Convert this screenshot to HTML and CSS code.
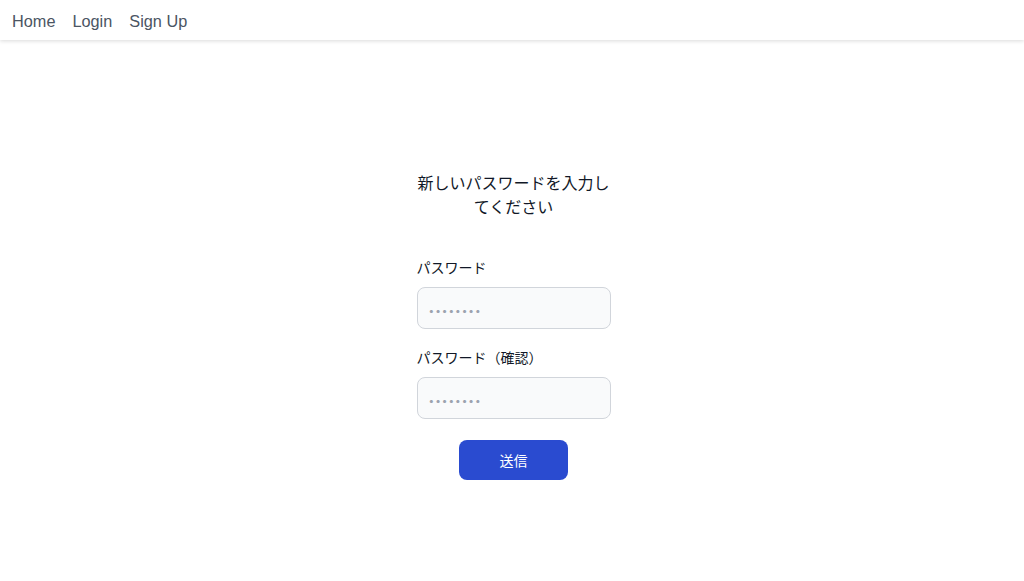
FILE: index.html
```html
<!DOCTYPE html>
<html lang="ja">
<head>
<meta charset="utf-8">
<link rel="stylesheet" href="styles.css">
</head>
<body>
<nav class="nav">
  <a class="nav-link" href="#">Home</a>
  <a class="nav-link" href="#">Login</a>
  <a class="nav-link" href="#">Sign Up</a>
</nav>
<main class="main">
  <form class="form">
    <h1 class="title">新しいパスワードを入力してください</h1>
    <div class="field first">
      <label class="label">パスワード</label>
      <input class="input" type="password" placeholder="••••••••">
    </div>
    <div class="field">
      <label class="label">パスワード（確認）</label>
      <input class="input" type="password" placeholder="••••••••">
    </div>
    <div class="actions">
      <button class="btn" type="button">送信</button>
    </div>
  </form>
</main>
</body>
</html>
```
FILE: styles.css
```css
* { box-sizing: border-box; }
html, body { margin: 0; padding: 0; background: #fff; }
body {
  font-family: Inter, "Noto Sans CJK JP", sans-serif;
  color: #111827;
}
.nav {
  height: 40px;
  display: flex;
  align-items: center;
  gap: 17px;
  padding-left: 12px;
  padding-top: 1px;
  box-shadow: 0 1px 4px rgba(0,0,0,0.15);
}
.nav-link {
  color: #4b5563;
  text-decoration: none;
  font-family: "Liberation Sans", Arial, sans-serif;
  font-size: 16.3px;
  line-height: 24px;
}
.main {
  display: flex;
  justify-content: center;
  padding-top: 131px;
  padding-left: 3px;
}
.form {
  width: 194px;
  display: flex;
  flex-direction: column;
}
.title {
  margin: 0;
  font-size: 16px;
  font-weight: 400;
  line-height: 24px;
  text-align: center;
}
.field { display: flex; flex-direction: column; margin-top: 19px; }
.field.first { margin-top: 39px; }
.label {
  font-size: 14px;
  line-height: 20px;
  margin-bottom: 9px;
  color: #111827;
}
.input {
  height: 42px;
  width: 100%;
  border: 1px solid #d1d5db;
  border-radius: 8px;
  background: #f9fafb;
  padding: 0 11px;
  font-size: 14px;
  font-family: inherit;
  outline: none;
}
.input::placeholder { color: #9ca3af; letter-spacing: 1px; font-size: 10px; }
.actions { display: flex; justify-content: center; margin-top: 21px; }
.btn {
  width: 109px;
  height: 40px;
  border: none;
  border-radius: 8px;
  background: #2a4bd0;
  color: #fff;
  font-size: 14px;
  font-family: inherit;
}
```
